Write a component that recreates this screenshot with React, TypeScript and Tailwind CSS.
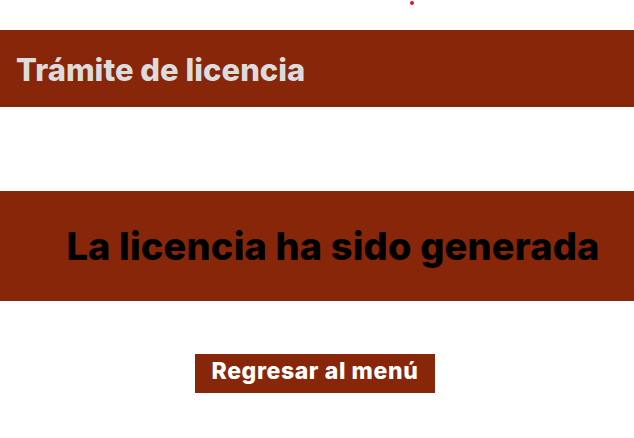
export default function App() {
  return (
    <div className="relative min-h-[438px] w-full bg-white font-['Inter',sans-serif]">
      {/* stray dot near the top */}
      <div className="absolute left-[410px] top-[1px] h-[4px] w-[4px] rounded-full bg-[#e8102a]" />

      <div className="pt-[30px]">
        <header className="flex h-[77px] items-center bg-[#88260a] px-4 pt-[3px]">
          <h1 className="text-[31px] font-extrabold text-[#dcdcdc]">
            Trámite de licencia
          </h1>
        </header>
      </div>

      <section className="mt-[84px] flex h-[110px] items-center justify-center bg-[#88260a] pl-8">
        <h2 className="text-[38px] font-extrabold tracking-[0.15px] text-black">
          La licencia ha sido generada
        </h2>
      </section>

      <div className="mt-[53px] flex justify-center pr-1">
        <button className="h-[39px] w-[240px] bg-[#88260a] pb-1 text-[23px] font-extrabold tracking-[0.6px] text-white">
          Regresar al menú
        </button>
      </div>
    </div>
  );
}
